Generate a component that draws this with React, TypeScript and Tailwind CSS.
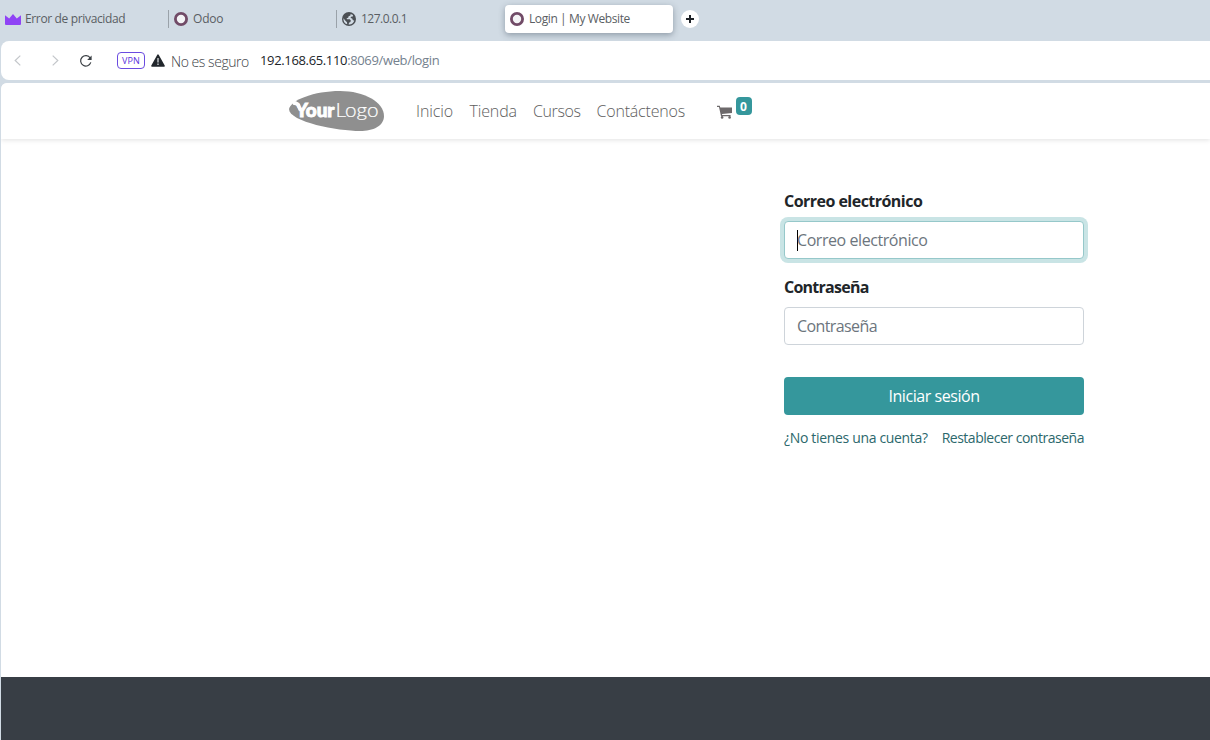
import React from "react";

function Ring() {
  return (
    <svg className="h-[14px] w-[14px] shrink-0" viewBox="0 0 14 14">
      <circle cx="7" cy="7" r="5.6" fill="#f4f4f6" stroke="#714b67" strokeWidth="2.8" />
    </svg>
  );
}

function Crown() {
  return (
    <svg className="h-[11px] w-4 shrink-0" viewBox="0 0 16 11">
      <path d="M0 1.2 4.2 4.4 8 0l3.8 4.4L16 1.2V10a1 1 0 0 1-1 1H1a1 1 0 0 1-1-1Z" fill="#8f43f5" />
    </svg>
  );
}

function Globe() {
  return (
    <svg className="h-[14px] w-[14px] shrink-0" viewBox="0 0 14 14">
      <circle cx="7" cy="7" r="7" fill="#4b4f54" />
      <path
        d="M8.6 1.9 8.4 3.4 6.6 4.2 6.2 5.8 4.6 6.2 5 7.2 7.8 7.3 8.8 8.6 8.4 10 7 10.8 6.6 12.4A5.6 5.6 0 0 0 12.3 8.8L10.8 8 10.2 6.6 8.6 6 9 4.8 10.8 4.4 11 3.1A5.4 5.4 0 0 0 8.6 1.9ZM1.5 6.2A5.6 5.6 0 0 0 5.2 12.3L5 10.2 3.2 8.6Z"
        fill="#d1dbe4"
      />
    </svg>
  );
}

function Tab({ icon, label, className = "" }: { icon: React.ReactNode; label: string; className?: string }) {
  return (
    <div className={`flex h-[28px] items-center gap-1 whitespace-nowrap text-[12px] text-[#5a5e63] ${className}`}>
      {icon}
      {label}
    </div>
  );
}

function TabStrip() {
  return (
    <div className="flex h-[41px] pt-[5px]">
      <Tab icon={<Crown />} label="Error de privacidad" className="w-[168px] pl-[5px] tracking-[-0.35px]" />
      <div className="mt-[5px] h-[18px] w-px bg-[#9aa2a9]" />
      <Tab icon={<Ring />} label="Odoo" className="w-[167px] gap-[5px] pl-[5px] tracking-[-0.2px]" />
      <div className="mt-[5px] h-[18px] w-px bg-[#9aa2a9]" />
      <Tab icon={<Globe />} label="127.0.0.1" className="w-[168px] gap-[5px] pl-[5px] tracking-[-0.5px]" />
      <Tab
        icon={<Ring />}
        label="Login | My Website"
        className="w-[168px] gap-[5px] rounded-[4px] bg-white pl-[5px] tracking-[-0.4px] shadow-[0_2px_6px_rgba(60,75,90,0.45)]"
      />
      <div className="mt-[5px] ml-2 flex h-[18px] w-[18px] items-center justify-center rounded-full bg-white">
        <svg className="h-2 w-2" viewBox="0 0 8 8" stroke="#1d2126" strokeWidth="2">
          <path d="M4 0v8M0 4h8" />
        </svg>
      </div>
    </div>
  );
}

function AddressBar() {
  return (
    <div className="ml-px flex h-[39px] items-center rounded-l-[8px] bg-white whitespace-nowrap">
      <svg className="ml-[13px] h-[11px] w-[7px]" viewBox="0 0 7 11" fill="none" stroke="#c3c6ca" strokeWidth="1.2">
        <path d="M6.3.6 1.2 5.5l5.1 4.9" />
      </svg>
      <svg className="ml-[31px] h-[11px] w-[7px]" viewBox="0 0 7 11" fill="none" stroke="#c3c6ca" strokeWidth="1.2">
        <path d="m.7.6 5.1 4.9L.7 10.4" />
      </svg>
      <svg className="ml-[20px] h-[14px] w-[14px]" viewBox="0 0 14 14">
        <path d="M11.8 8.4A5.2 5.2 0 1 1 11.2 4" fill="none" stroke="#3a3f44" strokeWidth="1.2" />
        <path d="M12.6 1.6V6H8.2Z" fill="#3a3f44" />
      </svg>
      <div className="ml-[24px] flex h-[17px] w-7 items-center justify-center rounded-[4px] border border-[#6a4be0] text-[9px] tracking-[0.1px] text-[#5a32dd]">
        VPN
      </div>
      <svg className="ml-[6px] h-[13px] w-[14px]" viewBox="0 0 14 13">
        <path d="M7 1.2 13 12H1Z" fill="#22272c" stroke="#22272c" strokeWidth="1.6" strokeLinejoin="round" />
        <path d="M7 4v4.6M7 9.6v1.5" stroke="#d5d8da" strokeWidth="1.3" />
      </svg>
      <span className="ml-[6px] w-[89px] pt-[2px] text-[14px] font-light tracking-[-0.45px] text-[#3c4146]">No es seguro</span>
      <span className="text-[13px] tracking-[-0.35px] text-[#74818e]">
        <span className="text-[#202428]">192.168.65.110</span>:8069/web/login
      </span>
    </div>
  );
}

function Logo() {
  return (
    <svg className="h-10 w-24 shrink-0" viewBox="0 0 96 40">
      <path
        d="M1 18C3 9 26 0 52 0c24 0 44 11 44 25 0 10-11 15-24 15C50 40 1 31 1 18Z"
        fill="#8f8f8f"
      />
      <path d="M4 10.5 7 11l.5-1.3 4.5 3.3 1 6-2 1-2.5-5.5-3.5-.8Z" fill="#fff" />
      <text x="7.5" y="25.5" fill="#fff" stroke="#fff" strokeWidth="0.9" fontSize="18.5" fontWeight="900" textLength="39" lengthAdjust="spacingAndGlyphs" fontFamily="Lato">
        Your
      </text>
      <text x="47.6" y="25.5" fill="#fff" stroke="#fff" strokeWidth="0.2" fontSize="19.5" fontWeight="300" textLength="43" lengthAdjust="spacingAndGlyphs" fontFamily="Lato">
        Logo
      </text>
    </svg>
  );
}

function SiteHeader() {
  return (
    <header className="flex h-14 items-center bg-white pl-[287px] text-[16px] font-light whitespace-nowrap text-[#5e5e5e] shadow-[0_1px_5px_rgba(0,0,0,0.12)]">
      <Logo />
      <nav className="ml-8 flex">
        <a className="w-[53.5px] tracking-[-0.1px]">Inicio</a>
        <a className="w-[63.5px] tracking-[-0.15px]">Tienda</a>
        <a className="w-[63.5px] tracking-[-0.4px]">Cursos</a>
        <a className="w-[120px] tracking-[-0.2px]">Contáctenos</a>
      </nav>
      <svg className="mt-px h-[14px] w-[15px]" viewBox="0 0 15 14" fill="#6d696b">
        <path d="M0 .8h2.8l.5 1.6H15v5.5L5 9.1l.2 1H13.6v1.2H4L2 2.1H0Z" />
        <circle cx="5.1" cy="12.4" r="1.3" />
        <circle cx="12.6" cy="12.4" r="1.3" />
      </svg>
      <span className="mb-[10px] ml-1 flex h-[18px] w-4 items-center justify-center rounded-[4px] bg-[#35979c] pt-px text-[12px] font-bold text-white">
        0
      </span>
    </header>
  );
}

function LoginForm() {
  return (
    <form className="ml-[783px] flex w-[300px] flex-col pt-[50px] text-[16px] leading-6 whitespace-nowrap">
      <label className="font-bold tracking-[-0.53px] text-[#212529]">Correo electrónico</label>
      <div className="mt-2 flex h-[38px] items-center rounded-[4px] border border-[#96c8ca] bg-white pl-3 tracking-[-0.43px] text-[#6c757d] shadow-[0_0_0_4px_#c9e4e5]">
        <span className="-mr-px h-[21px] w-px bg-black" />
        Correo electrónico
      </div>
      <label className="mt-4 font-bold tracking-[-0.75px] text-[#212529]">Contraseña</label>
      <div className="mt-2 flex h-[38px] items-center rounded-[4px] border border-[#ced4da] bg-white pl-3 tracking-[-0.6px] text-[#6c757d]">
        Contraseña
      </div>
      <button type="button" className="mt-8 h-[38px] rounded-[4px] bg-[#35979c] tracking-[-0.45px] text-white">
        Iniciar sesión
      </button>
      <div className="mt-3 flex justify-between text-[14px] leading-[21px] text-[#2c686c]">
        <a className="tracking-[-0.33px]">¿No tienes una cuenta?</a>
        <a className="tracking-[-0.48px]">Restablecer contraseña</a>
      </div>
    </form>
  );
}

export default function App() {
  return (
    <div className="flex h-[740px] w-[1210px] flex-col overflow-hidden bg-[#d1dbe4] font-['Open_Sans','Noto_Sans',sans-serif]">
      <TabStrip />
      <AddressBar />
      <div className="mt-[3px] ml-px flex flex-1 flex-col overflow-hidden rounded-tl-[6px] bg-white">
        <SiteHeader />
        <main className="h-[538px]">
          <LoginForm />
        </main>
        <footer className="flex-1 bg-[#383e45]" />
      </div>
    </div>
  );
}
